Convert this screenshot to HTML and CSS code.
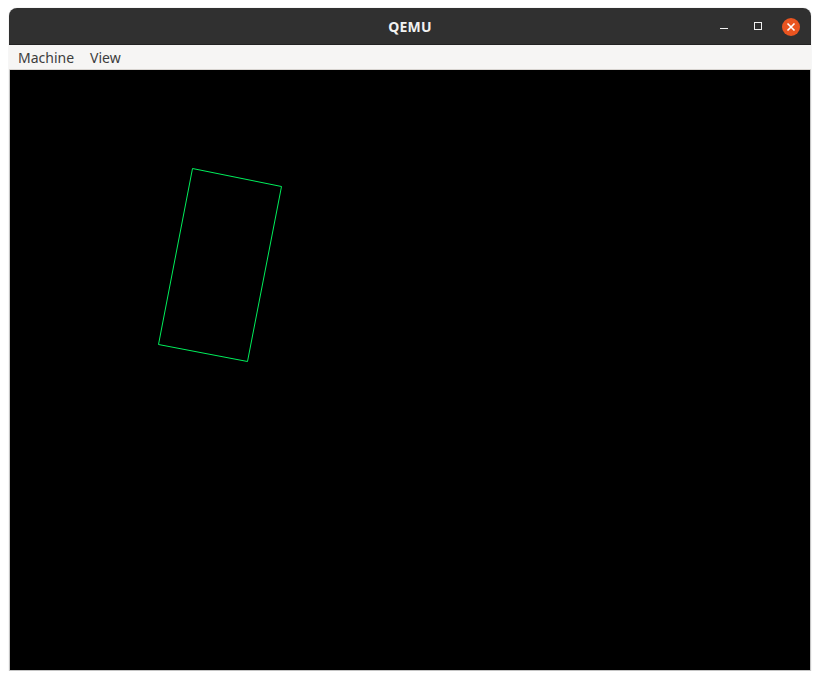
FILE: index.html
```html
<!DOCTYPE html>
<html>
<head>
<meta charset="utf-8">
<link rel="stylesheet" href="styles.css">
</head>
<body>
<div class="window">
  <div class="titlebar">
    <div class="title">QEMU</div>
    <div class="controls">
      <span class="btn min"></span>
      <span class="btn max"></span>
      <span class="btn close">
        <svg width="18" height="18" viewBox="0 0 18 18"><path d="M5.5 5.5 L12.5 12.5 M12.5 5.5 L5.5 12.5" stroke="#fff" stroke-width="1.6" fill="none"/></svg>
      </span>
    </div>
  </div>
  <div class="menubar">
    <span class="menu">Machine</span>
    <span class="menu">View</span>
  </div>
  <div class="screen">
    <svg class="display" width="800" height="600" viewBox="0 0 800 600">
      <polygon points="182.5,98.5 271.5,116.5 237.5,291.5 148.5,274.5" fill="none" stroke="#00ee5c" stroke-width="1"/>
    </svg>
  </div>
</div>
</body>
</html>
```
FILE: styles.css
```css
html, body {
  margin: 0;
  padding: 0;
  background: #ffffff;
}
.window {
  margin: 8px 0 0 9px;
  width: 802px;
  border-radius: 8px 8px 0 0;
  overflow: hidden;
  box-shadow: 0 0 1px rgba(0,0,0,0.35);
}
.titlebar {
  height: 36px;
  background: #303030;
  display: flex;
  align-items: center;
  justify-content: center;
  position: relative;
  border-bottom: 1px solid #222;
}
.title {
  color: #f2f2f2;
  font-family: "Noto Sans", "DejaVu Sans", sans-serif;
  font-weight: bold;
  font-size: 14px;
  letter-spacing: 0.2px;
}
.controls {
  position: absolute;
  right: 0;
  top: 0;
  height: 36px;
  display: flex;
  align-items: center;
}
.btn {
  display: block;
  box-sizing: border-box;
}
.min {
  width: 8px;
  height: 1px;
  background: #f0f0f0;
  margin-right: 26px;
  margin-top: 5px;
}
.max {
  width: 8px;
  height: 8px;
  border: 1px solid #f0f0f0;
  margin-right: 20px;
  margin-top: -1px;
}
.close {
  width: 18px;
  height: 18px;
  border-radius: 50%;
  background: #e95420;
  margin-right: 11px;
  margin-top: 1px;
}
.close svg {
  display: block;
}
.menubar {
  height: 25px;
  background: #f6f5f4;
  border-bottom: 1px solid #d8d4d0;
  box-sizing: border-box;
  display: flex;
  align-items: center;
  padding-left: 9px;
  padding-top: 2px;
  gap: 16px;
  font-family: "Noto Sans", "DejaVu Sans", sans-serif;
  font-size: 14px;
  color: #3d3d3d;
}
.menu {
  line-height: 1;
}
.screen {
  background: #000;
  border: 1px solid #c4c4c4;
  border-top: none;
  width: 800px;
  height: 600px;
}
.display {
  display: block;
}
```
